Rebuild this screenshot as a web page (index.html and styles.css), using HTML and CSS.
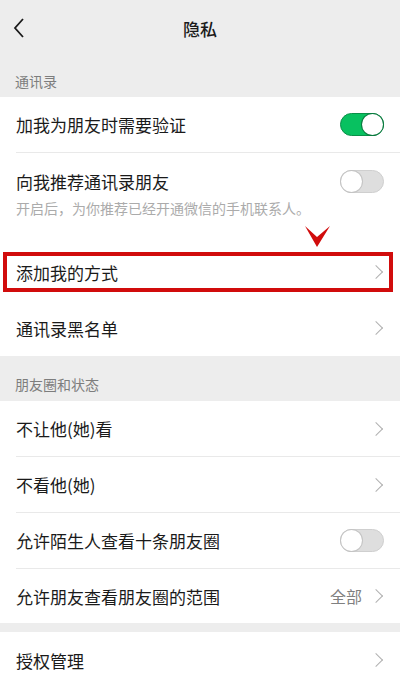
FILE: index.html
```html
<!DOCTYPE html>
<html lang="zh-CN">
<head>
    <meta charset="UTF-8">
    <meta name="viewport" content="width=device-width, initial-scale=1.0">
    <title>隐私</title>
    <link rel="stylesheet" href="styles.css">
</head>
<body>

    <div class="topbar">
        <div class="back">
            <svg width="12" height="20" viewBox="0 0 12 20"><path d="M10 1 L2 10 L10 19" fill="none" stroke="#1a1a1a" stroke-width="1.8"/></svg>
        </div>
        <div class="title">隐私</div>
        <div></div>
    </div>

    <div class="label label-first">通讯录</div>
    <div class="group">
        <div class="row line">
            <span>加我为朋友时需要验证</span>
            <span class="switch on"></span>
        </div>
        <div class="row row-sub">
            <div class="row-top">
                <span>向我推荐通讯录朋友</span>
                <span class="switch"></span>
            </div>
            <div class="sub">开启后，为你推荐已经开通微信的手机联系人。</div>
        </div>
        <div class="row mark">
            <span>添加我的方式</span>
            <span class="arrow"></span>
            <svg class="pointer" width="26" height="23" viewBox="0 0 26 23"><polygon points="0,1 12,12 25,1 12,22" fill="#d10c0c"/></svg>
        </div>
        <div class="row">
            <span>通讯录黑名单</span>
            <span class="arrow"></span>
        </div>
    </div>

    <div class="label label-second">朋友圈和状态</div>
    <div class="group">
        <div class="row line">
            <span>不让他(她)看</span>
            <span class="arrow"></span>
        </div>
        <div class="row line">
            <span>不看他(她)</span>
            <span class="arrow"></span>
        </div>
        <div class="row line">
            <span>允许陌生人查看十条朋友圈</span>
            <span class="switch"></span>
        </div>
        <div class="row short">
            <span>允许朋友查看朋友圈的范围</span>
            <span class="extra">全部<span class="arrow"></span></span>
        </div>
    </div>

    <div class="gap"></div>
    <div class="group">
        <div class="row">
            <span>授权管理</span>
            <span class="arrow"></span>
        </div>
    </div>

</body>
</html>
```

FILE: styles.css
```css
/* Général */
body {
    margin: 0;
    width: 400px;
    height: 684px;
    overflow: hidden;
    background: #ededed;
    font-family: "Noto Sans CJK SC", "Noto Sans", sans-serif;
    color: #1a1a1a;
}

/* Barre du haut */
.topbar {
    height: 56px;
    display: grid;
    grid-template-columns: 1fr auto 1fr;
    align-items: center;
}

.back {
    padding-left: 13px;
    display: flex;
    align-items: center;
}

.title {
    font-size: 17px;
    font-weight: 500;
}

/* Titres de section */
.label {
    font-size: 14px;
    color: #7d7d7d;
    padding-left: 15px;
    line-height: 20px;
    box-sizing: border-box;
}

.label-first {
    height: 41px;
    padding-top: 15px;
}

.label-second {
    height: 45px;
    padding-top: 18px;
}

/* Groupes */
.group {
    background: #ffffff;
}

.row {
    height: 56px;
    box-sizing: border-box;
    margin-left: 16px;
    padding-right: 16px;
    display: flex;
    align-items: center;
    justify-content: space-between;
    font-size: 17px;
}

.row.line {
    border-bottom: 1px solid #e9e9e9;
}

.row.short {
    height: 54px;
}

.row-sub {
    height: 91px;
    display: block;
    padding-top: 16px;
}

.row-top {
    display: flex;
    align-items: center;
    justify-content: space-between;
    height: 24px;
}

.sub {
    margin-top: 5px;
    font-size: 14px;
    line-height: 20px;
    color: #ababab;
}

/* Interrupteurs */
.switch {
    width: 44px;
    height: 23px;
    border-radius: 12px;
    background: #dedede;
    box-sizing: border-box;
    border: 1px solid #cfcfcf;
    display: flex;
    justify-content: flex-start;
}

.switch::after {
    content: "";
    width: 21px;
    height: 21px;
    border-radius: 50%;
    background: #ffffff;
    box-shadow: 0 0 0 1px #c4c4c4;
}

.switch.on {
    background: #08c160;
    border-color: #0a8f48;
    justify-content: flex-end;
}

.switch.on::after {
    box-shadow: 0 0 0 1px #0a7a3e;
}

/* Flèches */
.arrow {
    width: 9px;
    height: 9px;
    border-top: 1.4px solid #b0b0b0;
    border-right: 1.4px solid #b0b0b0;
    transform: rotate(45deg);
    margin-right: 3px;
}

.extra {
    display: flex;
    align-items: center;
    gap: 9px;
    color: #808080;
    font-size: 16px;
}

/* Annotation rouge */
.mark {
    position: relative;
}

.mark::before {
    content: "";
    position: absolute;
    left: -13px;
    right: 7px;
    top: 8px;
    bottom: 8px;
    border: 4.5px solid #d10c0c;
}

.pointer {
    position: absolute;
    left: 289px;
    top: -19px;
}

.gap {
    height: 9px;
}
```
